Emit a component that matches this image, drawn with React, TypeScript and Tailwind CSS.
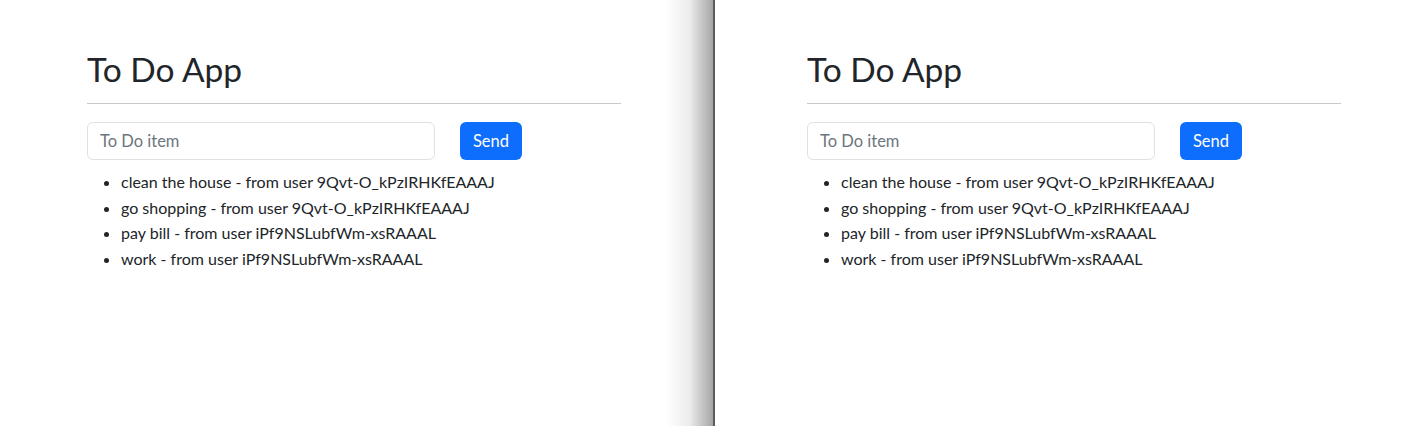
const items = [
  'clean the house - from user 9Qvt-O_kPzIRHKfEAAAJ',
  'go shopping - from user 9Qvt-O_kPzIRHKfEAAAJ',
  'pay bill - from user iPf9NSLubfWm-xsRAAAL',
  'work - from user iPf9NSLubfWm-xsRAAAL',
]

function TodoPanel() {
  return (
    <div className="w-[534px] pt-[50px] text-[#212529]">
      <h1 className="text-[33.5px] leading-[38px] font-normal">To Do App</h1>
      <hr className="mt-[15px] border-t border-[#c8c8c8]" />
      <div className="mt-[18px] flex items-center gap-[25px]">
        <input
          className="h-[38px] w-[348px] rounded-md border border-[#dee2e6] bg-white px-3 text-[16.5px] text-[#212529] outline-none placeholder:text-[#6c757d]"
          placeholder="To Do item"
        />
        <button
          type="button"
          className="h-[38px] w-[62px] rounded-md bg-[#0d6efd] text-[16.5px] text-white"
        >
          Send
        </button>
      </div>
      <ul className="mt-[9px] list-disc pl-[34px] text-base leading-[25.7px]">
        {items.map((t) => (
          <li key={t}>{t}</li>
        ))}
      </ul>
    </div>
  )
}

export default function App() {
  return (
    <div
      className="flex h-[426px] w-[1424px] overflow-hidden bg-white"
      style={{ fontFamily: 'Lato, "Noto Sans", sans-serif' }}
    >
      <div className="flex w-[715px]">
        <div className="flex-1 pl-[87px]">
          <TodoPanel />
        </div>
        <div className="w-[47px] bg-linear-to-r from-white via-[#ececec] to-[#a6a6a6]" />
        <div className="w-[2px] bg-[#5c5c5c]" />
      </div>
      <div className="flex-1 pl-[92px]">
        <TodoPanel />
      </div>
    </div>
  )
}
